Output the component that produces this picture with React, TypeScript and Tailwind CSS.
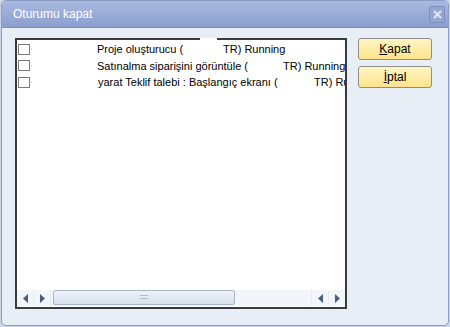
import React from "react";

const LeftArrow = () => (
  <svg width="5" height="9" viewBox="0 0 5 9"><path d="M5 0 L0 4.5 L5 9 Z" fill="#4a5d7a" /></svg>
);
const RightArrow = () => (
  <svg width="5" height="9" viewBox="0 0 5 9"><path d="M0 0 L5 4.5 L0 9 Z" fill="#4a5d7a" /></svg>
);

const rows = [
  { a: "Proje oluşturucu (", w: 126, b: "TR) Running", ml: 0 },
  { a: "Satınalma siparişini görüntüle (", w: 186, b: "TR) Running", ml: 0 },
  { a: "yarat Teklif talebi : Başlangıç ekranı (", w: 216, b: "TR) Running", ml: 1 },
];

export default function App() {
  return (
    <div className="w-[450px] h-[327px] bg-[#c9d4e6] overflow-hidden" style={{ fontFamily: '"Liberation Sans", Arial, sans-serif' }}>
      <div className="w-[448px] h-[326px] ml-[1px] rounded-[5px] border border-[#8a9cc4] bg-[#e8eef6] flex flex-col overflow-hidden">
        {/* Title bar */}
        <div className="h-[27px] shrink-0 flex items-center justify-between pl-[11px] pr-[3px] bg-gradient-to-b from-[#a9b9df] to-[#8b9fcf] border-b border-[#7f92bd]">
          <span className="text-white text-[12px] leading-none">Oturumu kapat</span>
          <div className="w-[16px] h-[17px] border border-[#7c8fbd] bg-[#93a6d3] rounded-[2px] flex items-center justify-center">
            <svg width="9" height="9" viewBox="0 0 9 9"><path d="M1 1 L8 8 M8 1 L1 8" stroke="#dfe6f5" strokeWidth="2" /></svg>
          </div>
        </div>
        {/* Body */}
        <div className="flex pt-[10px] pl-[13px]">
          <div className="w-[332px] h-[271px] border-2 border-[#3b3b3b] bg-white flex flex-col relative">
            <div className="absolute left-[183px] -top-[2px] w-[17px] h-[4px] bg-white" />
            <div className="flex-1 pt-[1px]">
              {rows.map((r, i) => (
                <div key={i} className="h-[16.5px] flex items-center whitespace-nowrap overflow-hidden text-[11px] text-black">
                  <div className="w-[12px] h-[11px] ml-[1px] border border-[#7a7a7a] bg-white shrink-0" />
                  <div className="w-[1px] h-[2px] bg-[#f3d77a] ml-[1px] shrink-0" />
                  <span className="inline-block shrink-0" style={{ marginLeft: 65 + r.ml }}>
                    <span className="inline-block" style={{ width: r.w }}>{r.a}</span>
                    <span>{r.b}</span>
                  </span>
                </div>
              ))}
            </div>
            {/* Horizontal scrollbar */}
            <div className="h-[16px] mb-[1px] flex bg-[#f2f5fa]">
              <div className="w-[17px] flex items-center justify-center border-r border-[#e6ebf2]"><LeftArrow /></div>
              <div className="w-[17px] flex items-center justify-center border-r border-[#e6ebf2]"><RightArrow /></div>
              <div className="w-[2px]" />
              <div className="w-[182px] h-[15px] rounded-[2px] border border-[#a9b6c8] bg-gradient-to-b from-[#eef3f8] to-[#d6e0ec] flex items-center justify-center">
                <svg width="9" height="5" viewBox="0 0 9 5">
                  {[0, 3, 6].map((x) => (
                    <g key={x}>
                      <rect x={x} y={0} width="2" height="1" fill="#9aa8bb" />
                      <rect x={x} y={3} width="2" height="1" fill="#9aa8bb" />
                    </g>
                  ))}
                </svg>
              </div>
              <div className="flex-1" />
              <div className="w-[17px] flex items-center justify-center border-l border-[#e6ebf2]"><LeftArrow /></div>
              <div className="w-[17px] flex items-center justify-center border-l border-[#e6ebf2]"><RightArrow /></div>
            </div>
          </div>
          <div className="ml-[11px] flex flex-col gap-[6px]">
            <button className="w-[74px] h-[22px] rounded-[3px] border border-[#8e8e8e] bg-gradient-to-b from-[#fff5c4] to-[#fde38a] text-[12px] text-black leading-none">
              <span className="underline">K</span>apat
            </button>
            <button className="w-[74px] h-[22px] rounded-[3px] border border-[#8e8e8e] bg-gradient-to-b from-[#fff5c4] to-[#fde38a] text-[12px] text-black leading-none">
              <span className="underline">İ</span>ptal
            </button>
          </div>
        </div>
      </div>
    </div>
  );
}
